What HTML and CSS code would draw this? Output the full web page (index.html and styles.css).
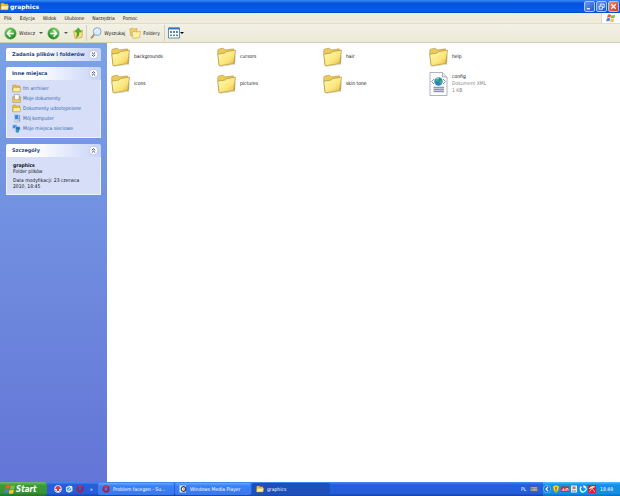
FILE: index.html
```html
<!DOCTYPE html>
<html lang="pl">
<head>
<meta charset="utf-8">
<title>graphics</title>
<link rel="stylesheet" href="styles.css">
</head>
<body>
<svg class="defs" aria-hidden="true">
  <defs>
    <linearGradient id="gf" x1="0" y1="0" x2="1" y2="1"><stop offset="0" stop-color="#fffbb8"/><stop offset=".6" stop-color="#fbe67c"/><stop offset="1" stop-color="#e3b53c"/></linearGradient>
    <radialGradient id="gg" cx=".4" cy=".3" r=".7"><stop offset="0" stop-color="#8be078"/><stop offset=".6" stop-color="#3ead35"/><stop offset="1" stop-color="#1f7d1c"/></radialGradient>
    <symbol id="folder" viewBox="0 0 18 18">
      <path d="M2 17.500 15.500 16 17.800 6 17 16 4 18z" fill="#8a8570" opacity=".5"/>
      <path d="M.6 3.200 1.300 1.600 6 .6 7.500 2.400 15.500 1.300 16.500 14 2 16.500z" fill="#eacb5c" stroke="#b9963a" stroke-width=".6"/>
      <path d="M.7 6.300 7.500 5.300 9.200 3.900 17.500 2.500 15.800 15.300 2 17.300z" fill="url(#gf)" stroke="#b08c2c" stroke-width=".6"/>
    </symbol>
    <symbol id="minifolder" viewBox="0 0 10 10">
      <path d="M.7 2 1.500 1.200H4l1 1h3.800V8.500H.7z" fill="#e9bd45" stroke="#a98122" stroke-width=".5"/>
      <path d="M1.400 4H9.600L8.800 8.600H.8z" fill="#fff0a0" stroke="#b98e2c" stroke-width=".5"/>
    </symbol>
    <symbol id="flag" viewBox="0 0 12 12">
      <path d="M2 2.500Q4 .8 6 2L5.200 5.600Q3.300 4.600 1.200 6z" fill="#ed5b2c"/>
      <path d="M6.600 2.300Q8.500 3.300 11 2L10.200 5.700Q8 7 5.800 5.900z" fill="#7cbd42"/>
      <path d="M1 6.700Q3 5.300 5 6.400L4.200 10Q2.300 8.900.2 10.300z" fill="#4c80d8"/>
      <path d="M5.600 6.700Q7.800 7.700 10 6.500L9.200 10.200Q7 11.400 4.800 10.300z" fill="#f8c832"/>
    </symbol>
    <symbol id="arrowball" viewBox="0 0 13 13">
      <circle cx="6.500" cy="6.500" r="5.700" fill="url(#gg)" stroke="#7fb27a" stroke-width=".6"/>
      <path d="M6.400 3.300 3.300 6.500 6.400 9.700M3.800 6.500H9.800" fill="none" stroke="#fff" stroke-width="1.500"/>
    </symbol>
    <symbol id="up" viewBox="0 0 8 8"><circle cx="4" cy="4" r="3.600" fill="#fff" stroke="#b7bfd8" stroke-width=".6"/><path d="M2.500 3.800 4 2.400 5.500 3.800M2.500 5.900 4 4.500 5.500 5.900" fill="none" stroke="#24356f" stroke-width=".8"/></symbol>
    <symbol id="opera" viewBox="0 0 8 8"><ellipse cx="4" cy="4" rx="2.500" ry="2.800" fill="none" stroke="#b01a3c" stroke-width="1.900"/><path d="M2 2Q4 0 6 2" fill="none" stroke="#e07080" stroke-width=".5"/></symbol>
  </defs>
</svg>
<div class="window">
  <header class="titlebar">
    <svg class="i9"><use href="#minifolder"/></svg>
    <h1>graphics</h1>
    <div class="captions">
      <button class="cap" aria-label="Minimalizuj"><svg viewBox="0 0 10 10"><path d="M2 7.500H5.500" stroke="#fff" stroke-width="1.400"/></svg></button>
      <button class="cap" aria-label="Przywróć"><svg viewBox="0 0 10 10"><path d="M4 4V2.300H8V6H6.500M2.300 4.500H6V8H2.300z" fill="none" stroke="#fff" stroke-width=".9"/></svg></button>
      <button class="cap close" aria-label="Zamknij"><svg viewBox="0 0 10 10"><path d="M2.500 2.500 7.500 7.500M7.500 2.500 2.500 7.500" stroke="#fff" stroke-width="1.300"/></svg></button>
    </div>
  </header>
  <nav class="menubar">
    <button>Plik</button><button>Edycja</button><button>Widok</button><button>Ulubione</button><button>Narzędzia</button><button>Pomoc</button>
    <span class="throbber"><svg class="i10"><use href="#flag"/></svg></span>
  </nav>
  <div class="toolbar">
    <button><svg class="i13"><use href="#arrowball"/></svg>Wstecz</button>
    <button class="drop" aria-label="Historia wstecz"></button>
    <button aria-label="Dalej"><svg class="i13 flip"><use href="#arrowball"/></svg></button>
    <button class="drop" aria-label="Historia dalej"></button>
    <button aria-label="Do góry"><svg class="i12" viewBox="0 0 12 12"><path d="M1.500 4 5 3 6 4 10.500 3 10 10.500 3 11.500z" fill="#f8df79" stroke="#bd9738" stroke-width=".6"/><path d="M4.300 10.500Q7.500 9 7 5H9.500L6.300.8 3 5H5Q5.500 8 4.300 10.500z" fill="#42b536" stroke="#278122" stroke-width=".4"/></svg></button>
    <i class="sep"></i>
    <button><svg class="i12" viewBox="0 0 12 12"><path d="M1 11.300 4.800 7" stroke="#bb8b6c" stroke-width="1.900"/><circle cx="7.200" cy="4.600" r="3.900" fill="#d6edfa" stroke="#87a8d2" stroke-width="1"/><path d="M5 4Q6 2 8 2.300" fill="none" stroke="#fff"/></svg>Wyszukaj</button>
    <button class="folders"><svg class="i12" viewBox="0 0 12 12"><path d="M.8 2 3.500 1 4.500 2 8 1.500V8L1.800 9z" fill="#f1d062" stroke="#bd973a" stroke-width=".5"/><path d="M3 5 6 4.300 7 5 11.500 4.300 10.500 10.500 4 11.500z" fill="#fff1a3" stroke="#bd973a" stroke-width=".5"/></svg>Foldery</button>
    <i class="sep"></i>
    <button aria-label="Widoki"><svg class="i12" viewBox="0 0 12 12"><path d="M.5 1H11.500V11H.5z" fill="#fff" stroke="#3f6fb2" stroke-width=".8"/><path d="M.5.500H11.500V2.500H.5z" fill="#3f75c5"/><path d="M2 5H4M5 5H7M8 5H10" stroke="#2c56a4" stroke-width="1.500"/><path d="M2 8.300H4M5 8.300H7M8 8.300H10" stroke="#4b9575" stroke-width="1.500"/></svg></button>
    <button class="drop dark" aria-label="Wybierz widok"></button>
  </div>
  <div class="body">
    <aside class="side">
      <section class="panel">
        <h2>Zadania plików i folderów<svg class="i9 down"><use href="#up"/></svg></h2>
      </section>
      <section class="panel">
        <h2>Inne miejsca<svg class="i9"><use href="#up"/></svg></h2>
        <div class="content links">
          <a href="#"><svg class="i9"><use href="#minifolder"/></svg>fm archiver</a>
          <a href="#"><svg class="i9" viewBox="0 0 10 10"><path d="M2.500.7H8V7H2.500z" fill="#fff" stroke="#77839c" stroke-width=".6"/><path d="M.8 3H2.500V6.500H8V3H9.300V9.300H.8z" fill="#f4d368" stroke="#a98335" stroke-width=".6"/></svg>Moje dokumenty</a>
          <a href="#"><svg class="i9"><use href="#minifolder"/></svg>Dokumenty udostępnione</a>
          <a href="#"><svg class="i9" viewBox="0 0 10 10"><path d="M2.500.8 7.500.5V6L3 6.500z" fill="#398ae0" stroke="#cad8ed" stroke-width=".8"/><path d="M7.800 1 9 1.500V8L7.500 8.500z" fill="#8ca1c5"/><path d="M2.500 8 7 7.300 8 8.500 4 9.500z" fill="#eee" stroke="#7988a8" stroke-width=".4"/></svg>Mój komputer</a>
          <a href="#"><svg class="i9" viewBox="0 0 10 10"><path d="M.8 1H5.500V5H.8z" fill="#318be1" stroke="#bdd1ef" stroke-width=".7"/><path d="M4 3H9V7H4z" fill="#1f69cc" stroke="#bdd1ef" stroke-width=".7"/><circle cx="6" cy="7.700" r="2" fill="#3196bd"/><path d="M5 7 7 6.500 6.500 9z" fill="#49ac5a"/></svg>Moje miejsca sieciowe</a>
        </div>
      </section>
      <section class="panel">
        <h2>Szczegóły<svg class="i9"><use href="#up"/></svg></h2>
        <div class="content details">
          <strong>graphics</strong>
          <p>Folder plików</p>
          <p class="date">Data modyfikacji: 23 czerwca 2010, 18:45</p>
        </div>
      </section>
    </aside>
    <main class="files">
      <div class="file"><svg><use href="#folder"/></svg><span>backgrounds</span></div>
      <div class="file"><svg><use href="#folder"/></svg><span>cursors</span></div>
      <div class="file"><svg><use href="#folder"/></svg><span>hair</span></div>
      <div class="file"><svg><use href="#folder"/></svg><span>help</span></div>
      <div class="file"><svg><use href="#folder"/></svg><span>icons</span></div>
      <div class="file"><svg><use href="#folder"/></svg><span>pictures</span></div>
      <div class="file"><svg><use href="#folder"/></svg><span>skin tone</span></div>
      <div class="file"><svg class="doc" viewBox="0 0 18 24"><path d="M.5.500H13L17.500 5V23.500H.5z" fill="#fff" stroke="#999fac" stroke-width=".8"/><path d="M13 .5V5H17.500" fill="#dfe3eb" stroke="#999fac" stroke-width=".7"/><path d="M4.500 7 2 9.500 4.500 12M13.500 7 16 9.500 13.500 12" fill="none" stroke="#8494b5" stroke-width="1"/><circle cx="9" cy="9.500" r="4.200" fill="#2785b9"/><path d="M6 7Q8 4.800 10 6L9 8.500 6.500 10zM10 9 12.800 8Q13 11 10.500 13z" fill="#44b278"/><path d="M7 6.500 9 6" stroke="#d3f2f0"/><path d="M4 15.500H14.500M4 17.500H14.500M4 19.500H14.500" stroke="#8f94b5" stroke-width="1.400"/></svg><span>config<small>Dokument XML</small><small>1 KB</small></span></div>
    </main>
  </div>
  <footer class="taskbar">
    <button class="start"><svg class="i12"><use href="#flag"/></svg>Start</button>
    <div class="quick">
      <button aria-label="Przeglądarka"><svg class="i8" viewBox="0 0 8 8"><circle cx="4" cy="4" r="3.700" fill="#eef"/><path d="M1.200 4Q1.500 1 4 1T6.800 4z" fill="#d83a3c"/><path d="M3 3H5V6H3z" fill="#d83a3c"/><path d="M1.500 5 2.500 6.500M6.500 5 5.500 6.500" stroke="#455b8e" stroke-width=".7"/></svg></button>
      <button aria-label="Pokaż pulpit"><svg class="i8" viewBox="0 0 8 8"><path d="M1 2 5 .5 7.500 2V6L4 7.700 1 6.500z" fill="#c8e5ed"/><path d="M2 3 5.500 2 6 5 2.500 6z" fill="#3994b4"/><path d="M3 5.500 7 1" stroke="#fff" stroke-width="1"/></svg></button>
      <button aria-label="Opera"><svg class="i8"><use href="#opera"/></svg></button>
      <span>»</span>
    </div>
    <div class="tasks">
      <button><svg class="i8"><use href="#opera"/></svg>Problem facegen - Su...</button>
      <button><svg class="i8" viewBox="0 0 8 8"><path d="M.5.500H7V7.500H.5z" fill="#e8edf7"/><circle cx="4.500" cy="4" r="2.300" fill="#fff" stroke="#273d74" stroke-width="1.200"/><circle cx="5" cy="4" r=".9" fill="#e58e27"/></svg>Windows Media Player</button>
      <button class="active"><svg class="i8"><use href="#minifolder"/></svg>graphics</button>
    </div>
    <div class="lang"><span>PL</span><svg class="i8" viewBox="0 0 8 8"><path d="M.3 1.800H7.700V6.500H.3z" fill="#c7c7bf" stroke="#333f65" stroke-width=".6"/><path d="M1 3.300H7M1 5H7" stroke="#334" stroke-width=".8" stroke-dasharray=".8 .4"/></svg></div>
    <div class="tray">
      <svg class="i8" viewBox="0 0 8 8"><circle cx="4" cy="4" r="3.700" fill="#1a78d8" stroke="#7cd1fa" stroke-width=".6"/><path d="M5 2 3 4 5 6" fill="none" stroke="#fff" stroke-width="1.100"/></svg>
      <svg class="i8" viewBox="0 0 8 8"><path d="M4 .3 7 1.300Q7 6 4 7.700 1 6 1 1.300z" fill="#f9d92c" stroke="#ba971b" stroke-width=".5"/><path d="M4 2V4.500M4 5.300V6.300" stroke="#333" stroke-width="1"/></svg>
      <svg class="i8" viewBox="0 0 8 8"><path d="M0 1.500H8V7H0z" fill="#d9252c"/><path d="M1 6 2.500 3.500V6M4 6V3.500M5.300 6V3.500H7V6" fill="none" stroke="#fff" stroke-width=".7"/></svg>
      <svg class="i8" viewBox="0 0 8 8"><path d="M1 .5H7V7.500H1z" fill="#e7eaf2"/><path d="M2.500 1.500H5.500V4H2.500z" fill="#e06b63"/><path d="M2 6H6" stroke="#7888ac"/></svg>
      <svg class="i8" viewBox="0 0 8 8"><path d="M2.300 1.500Q.5 4 2 6T6 6 6 2" fill="none" stroke="#eff7ff" stroke-width="1.300"/><path d="M4 .5 7 1 5 3.500z" fill="#fff"/></svg>
      <svg class="i8" viewBox="0 0 8 8"><path d="M0 0H8V8H0z" fill="#cf2435"/><path d="M1.200 3.700Q2.500.8 6.800 1.800 4.500 2.200 3.800 3 2.500 3 1.200 3.700zM3.700 2.500 6.800 7M4 3.500 1.500 6.800" fill="#fff" stroke="#fff" stroke-width=".6"/></svg>
      <time>18:49</time>
    </div>
  </footer>
</div>
</body>
</html>
```
FILE: styles.css
```css
* { box-sizing: border-box; }
body {
  margin: 0;
  font: 5px/7px "DejaVu Sans Condensed", "DejaVu Sans", sans-serif;
  color: #111;
}
h1, h2, p { margin: 0; font-size: inherit; }
button {
  display: flex;
  align-items: center;
  padding: 0;
  border: 0;
  background: none;
  color: inherit;
  font: inherit;
  white-space: nowrap;
}
svg { display: block; flex: none; }
.defs { position: absolute; width: 0; height: 0; }
.i8 { width: 8px; height: 8px; }
.i9 { width: 9px; height: 9px; }
.i10 { width: 10px; height: 10px; }
.i12 { width: 12px; height: 12px; }
.i13 { width: 13px; height: 13px; }
.flip { transform: scaleX(-1); }
.down { transform: scaleY(-1); }
.window { display: flex; flex-direction: column; min-height: 100vh; }

.titlebar {
  display: flex;
  align-items: center;
  gap: 1px;
  height: 13px;
  background: linear-gradient(#3a8bf5, #0654dd 25%, #0557e6 65%, #0562f2 85%, #0344bd);
  color: #fff;
}
.titlebar h1 { flex: 1; font: bold 6px/7px "DejaVu Sans", sans-serif; }
.captions { display: flex; gap: 1px; padding-right: 1px; }
.cap {
  width: 11px;
  height: 11px;
  justify-content: center;
  border: 1px solid #a9c4f5;
  border-radius: 2px;
  background: linear-gradient(135deg, #6b96f2, #2156d4);
}
.cap svg { width: 9px; height: 9px; }
.close { background: linear-gradient(135deg, #ee8d70, #cf3c15); }

.menubar {
  display: flex;
  align-items: center;
  gap: 8px;
  height: 10px;
  padding-left: 4px;
  background: #efecdd;
}
.throbber {
  display: flex;
  align-self: stretch;
  align-items: center;
  justify-content: center;
  width: 19px;
  margin-left: auto;
  border-left: 1px solid #dcd8c8;
  background: #fff;
}
.toolbar {
  display: flex;
  align-items: center;
  height: 20px;
  padding-left: 4px;
  border-top: 1px solid #e0dccb;
  border-bottom: 1px solid #d2cdb8;
  background: linear-gradient(#f3f1e5, #ece9d8);
}
.toolbar button { gap: 2px; }
.drop::after { content: ""; border: 2px solid transparent; border-top-color: #555; border-bottom: 0; }
.toolbar .drop { width: 12px; justify-content: center; }
.toolbar .dark { width: 5px; }
.dark::after { border-top-color: #000; }
.sep { width: 1px; height: 16px; margin: 0 3px 0 2px; background: #d3cfbf; }
.folders { margin: 0 2px 0 4px; }

.body { display: flex; flex: 1; }
.side {
  display: flex;
  flex-direction: column;
  gap: 6px;
  width: 107px;
  padding: 5px 6px;
  background: linear-gradient(#7ba2e7, #6375d6);
}
.panel h2 {
  display: flex;
  align-items: center;
  justify-content: space-between;
  height: 13px;
  padding: 0 3px 0 6px;
  border-radius: 2px 2px 0 0;
  background: linear-gradient(90deg, #fff 30%, #c6d3f7);
  color: #24437f;
  font-family: "DejaVu Sans", sans-serif;
  white-space: nowrap;
}
.content { border: 1px solid #edf1fc; border-top: 0; background: #d6dff7; }
.links { display: grid; padding: 3px 5px 4px; }
.links a {
  display: flex;
  align-items: center;
  gap: 2px;
  height: 10px;
  color: #3562ad;
  text-decoration: none;
  white-space: nowrap;
}
.details { padding: 5px 12px 5px 6px; line-height: 6px; }
.details strong { display: block; }
.date { padding-top: 3px; }

.files {
  display: grid;
  flex: 1;
  grid-template-columns: repeat(auto-fill, 106px);
  grid-auto-rows: 27px;
  align-content: start;
  padding-left: 4px;
  background: #fff;
}
.file { display: flex; align-items: center; gap: 4px; }
.file svg { width: 19px; height: 20px; }
.file .doc { height: 24px; }
.file small { display: block; color: #858585; font-size: inherit; }

.taskbar {
  display: flex;
  align-items: stretch;
  height: 14px;
  background: linear-gradient(#4a8bf0, #245edb 20%, #245edb 80%, #1941a5);
  color: #fff;
}
.start {
  width: 47px;
  padding-left: 4px;
  border-radius: 0 4px 4px 0;
  background: linear-gradient(#6fbb6c, #3a9a3a 25%, #379437 75%, #26702a);
  font-size: 8px;
  font-style: italic;
  font-weight: bold;
}
.quick { display: flex; align-items: center; gap: 3px; width: 51px; padding-left: 7px; }
.quick span { margin-left: 3px; }
.tasks { display: flex; flex: 1; gap: 1px; padding: 1px 0; }
.tasks button {
  gap: 3px;
  width: 76px;
  padding-left: 4px;
  border-radius: 2px;
  background: linear-gradient(#6ca5f9, #3c81f3 25%, #3879ec);
}
.tasks .active { width: 78px; background: #1e50b9; }
.lang { display: flex; align-items: center; gap: 4px; width: 22px; }
.tray {
  display: flex;
  align-items: center;
  gap: 1px;
  padding-right: 7px;
  background: linear-gradient(#4fc2f6, #1290e6 20%, #1290e6 80%, #0d6cc4);
}
.tray time { margin-left: 3px; }
```
